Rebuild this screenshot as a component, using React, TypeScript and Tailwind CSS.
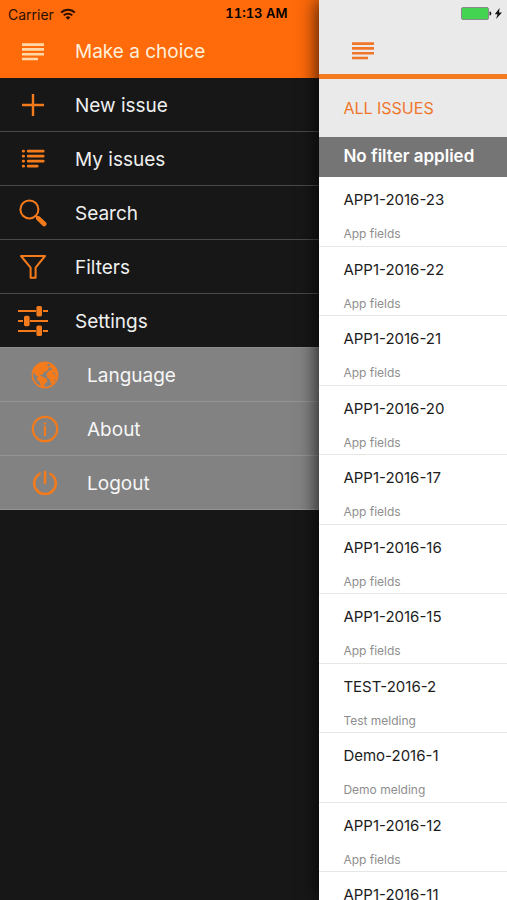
import type { ReactNode } from 'react';

type MenuItem = {
  label: string;
  icon: ReactNode;
};

type Issue = {
  id: string;
  desc: string;
};

const WifiIcon = () => (
  <svg viewBox="0 0 16 12" className="w-4 h-3" fill="none" stroke="currentColor" strokeWidth="2">
    <path d="M1.2 4.6a9.6 9.6 0 0 1 13.6 0" />
    <path d="M3.7 7.4a6.1 6.1 0 0 1 8.6 0" />
    <path d="M8 11.8 5.6 9.4a3.4 3.4 0 0 1 4.8 0z" fill="currentColor" stroke="none" />
  </svg>
);

const BatteryIcon = () => (
  <svg viewBox="0 0 42 14" className="w-[42px] h-[14px]">
    <rect x="0.5" y="0.5" width="27" height="12" rx="1.5" fill="#43d551" stroke="#8a8a8a" />
    <path d="M28.5 4.5h.6a1.2 2 0 0 1 0 4h-.6z" fill="#222" />
    <path d="M38.6 1 33.8 7.2h2.8L35 12l6-6.600h-3z" fill="#111" />
  </svg>
);

const LinesIcon = () => (
  <svg viewBox="0 0 24 20" className="w-6 h-5" fill="none" stroke="currentColor" strokeWidth="2.6">
    <path d="M1 2.6h22M1 7.4h22M1 12.2h22M1 17h16" />
  </svg>
);

const PlusIcon = () => (
  <svg viewBox="0 0 24 24" className="w-6 h-6" fill="none" stroke="currentColor" strokeWidth="2.4">
    <path d="M12 1v22M1 12h22" />
  </svg>
);

const ListIcon = () => (
  <svg viewBox="0 0 24 20" className="w-6 h-5" fill="none" stroke="currentColor" strokeWidth="2.8" strokeLinecap="round">
    <path d="M7.200 2.2h15M7.200 7.2h15M7.200 12.2h15M7.200 17.2h9" />
    <path d="M2.200 2.2h.4M2.200 7.2h.4M2.200 12.2h.4M2.200 17.2h.4" />
  </svg>
);

const SearchIcon = () => (
  <svg viewBox="0 0 28 28" className="w-7 h-7" fill="none" stroke="currentColor">
    <circle cx="10.4" cy="10.4" r="9" strokeWidth="2" />
    <path d="m16.6 16.6 3.4 3.4" strokeWidth="2.4" />
    <path d="m19.4 19.4 5.8 5.600" strokeWidth="4.6" strokeLinecap="round" />
  </svg>
);

const FilterIcon = () => (
  <svg viewBox="0 0 28 26" className="w-7 h-[26px]" fill="none" stroke="currentColor" strokeWidth="2" strokeLinejoin="round">
    <path d="M2 2h24l-9.4 11.6v10.2h-5V13.6z" />
  </svg>
);

const SlidersIcon = () => (
  <svg viewBox="0 0 30 30" className="w-[30px] h-[30px]" fill="none" stroke="currentColor">
    <path d="M0 5h18M25 5h5M0 15h5M12 15h18M0 25h18M25 25h5" strokeWidth="2.2" />
    <g fill="currentColor" stroke="none">
      <rect x="18.4" y="0" width="5.6" height="10.4" rx="1.6" />
      <rect x="6" y="9.8" width="5.6" height="10.4" rx="1.6" />
      <rect x="18.4" y="19.600" width="5.6" height="10.4" rx="1.6" />
    </g>
  </svg>
);

const GlobeIcon = () => (
  <svg viewBox="0 0 28 28" className="w-7 h-7">
    <circle cx="14" cy="14" r="12.6" fill="none" stroke="currentColor" strokeWidth="1.6" />
    <path
      fill="currentColor"
      d="M1.5 11C3 5.500 7 2 12 1.200l5 .8-1 2.500 2.500 1-2 4-3 1.500-2 2.500-2.500 1-1 1.500-3-1.500-2.500-3.500z"
    />
    <path fill="currentColor" d="m6.500 15.500 3.500-.5 5.500 2.500 1 2.500-3 3.500-.5 3.500-3-.5-1-5-3-3z" />
    <path
      fill="currentColor"
      d="M19 2.500c4 1.500 7 5 8 9.500l-.5 5-2.500 1.500-1.500 5-2.500-.5-1.500-5-2.500-1.500-.5-4 2.500-3 3-.5-.5-2-2-.5z"
    />
    <path d="m22 11 2.500 3.500" stroke="#828282" strokeWidth="1" />
  </svg>
);

const InfoIcon = () => (
  <svg viewBox="0 0 28 28" className="w-7 h-7" fill="none" stroke="currentColor" strokeWidth="2.2">
    <circle cx="14" cy="14" r="12.2" />
    <path d="M14 11v10M14 7.400v2" />
  </svg>
);

const PowerIcon = () => (
  <svg viewBox="0 0 28 28" className="w-7 h-7" fill="none" stroke="currentColor" strokeWidth="2.6">
    <path d="M9.6 4.400a10.8 10.8 0 1 0 8.8 0M14 2v13" />
  </svg>
);

const menuItems: MenuItem[] = [
  { label: 'New issue', icon: <PlusIcon /> },
  { label: 'My issues', icon: <ListIcon /> },
  { label: 'Search', icon: <SearchIcon /> },
  { label: 'Filters', icon: <FilterIcon /> },
  { label: 'Settings', icon: <SlidersIcon /> },
];

const settingsItems: MenuItem[] = [
  { label: 'Language', icon: <GlobeIcon /> },
  { label: 'About', icon: <InfoIcon /> },
  { label: 'Logout', icon: <PowerIcon /> },
];

const issues: Issue[] = [
  { id: 'APP1-2016-23', desc: 'App fields' },
  { id: 'APP1-2016-22', desc: 'App fields' },
  { id: 'APP1-2016-21', desc: 'App fields' },
  { id: 'APP1-2016-20', desc: 'App fields' },
  { id: 'APP1-2016-17', desc: 'App fields' },
  { id: 'APP1-2016-16', desc: 'App fields' },
  { id: 'APP1-2016-15', desc: 'App fields' },
  { id: 'TEST-2016-2', desc: 'Test melding' },
  { id: 'Demo-2016-1', desc: 'Demo melding' },
  { id: 'APP1-2016-12', desc: 'App fields' },
  { id: 'APP1-2016-11', desc: 'App fields' },
];

export default function App() {
  return (
    <div className="flex h-screen overflow-hidden bg-[#171717] font-['Inter','Liberation_Sans',sans-serif]">
      {/* Drawer */}
      <nav className="w-[63%] shrink-0">
        <div className="h-[78px] bg-[#ff6a0a]">
          <div className="h-7 flex items-center justify-between pl-2 pr-8 text-[#2a1000]">
            <span className="flex items-center gap-1.5 text-[14px]">
              Carrier
              <WifiIcon />
            </span>
            <span className="text-[13px] font-semibold tabular-nums text-black">11:13 AM</span>
          </div>
          <div className="h-12 flex items-center text-[19px] text-[#fff0dc]">
            <button type="button" aria-label="Close menu" className="w-[65px] flex justify-center text-[#ffd9a8]">
              <LinesIcon />
            </button>
            <h1 className="pl-[10px] pt-px">Make a choice</h1>
          </div>
        </div>

        <ul>
          {menuItems.map((item) => (
            <li key={item.label} className="border-b border-[#4a4a4a] last:border-[#8c8c8c]">
              <button type="button" className="w-full h-[53px] flex items-center text-[19px] text-[#efefef]">
                <span className="w-[65px] flex justify-center text-[#f47b1c]">{item.icon}</span>
                <span className="pl-[10px] pt-[3px]">{item.label}</span>
              </button>
            </li>
          ))}
        </ul>

        <ul className="bg-[#828282]">
          {settingsItems.map((item) => (
            <li key={item.label} className="border-b border-[#959595]">
              <button type="button" className="w-full h-[53px] flex items-center pl-3 text-[19px] text-[#f6f6f6]">
                <span className="w-[65px] flex justify-center text-[#f47b1c]">{item.icon}</span>
                <span className="pl-[10px] pt-[3px]">{item.label}</span>
              </button>
            </li>
          ))}
        </ul>
      </nav>

      {/* Issue list */}
      <main className="relative flex-1 bg-white shadow-[-2px_0_18px_rgba(0,0,0,0.75)]">
        <header className="bg-[#eaeaea] border-b-[5px] border-[#f47b20]">
          <div className="h-7 flex items-center justify-end pr-1">
            <BatteryIcon />
          </div>
          <div className="h-[46px] flex items-center pl-8">
            <button type="button" aria-label="Menu" className="text-[#f0762a]">
              <LinesIcon />
            </button>
          </div>
        </header>

        <h2 className="h-[58px] flex items-center bg-[#eaeaea] pl-6 text-[16px] text-[#f0762a]">ALL ISSUES</h2>
        <p className="h-10 flex items-center bg-[#757575] pl-6 text-[17px] font-semibold text-white">No filter applied</p>

        <ul>
          {issues.map((issue) => (
            <li key={issue.id} className="odd:h-[70px] even:h-[69px] pl-6 pt-[13px] border-b border-[#e6e6e6]">
              <a href="#" className="block">
                <span className="block text-[15px] leading-5 text-[#1c1c1c]">{issue.id}</span>
                <span className="block pt-4 text-[12px] leading-4 text-[#8e8e8e]">{issue.desc}</span>
              </a>
            </li>
          ))}
        </ul>
      </main>
    </div>
  );
}
